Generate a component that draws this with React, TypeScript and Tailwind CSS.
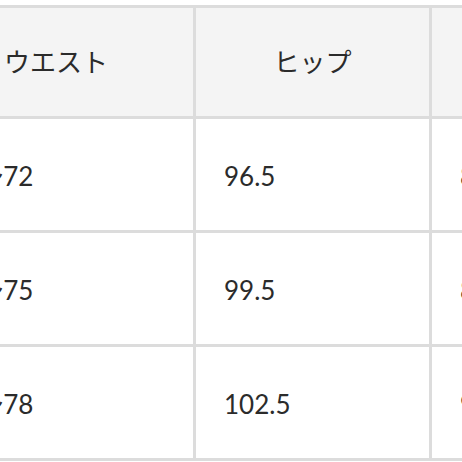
const headers = ['ウエスト', 'ヒップ', '股下']

const rows = [
  ['64〜72', '96.5', '84'],
  ['67〜75', '99.5', '86'],
  ['70〜78', '102.5', '90'],
]

export default function App() {
  return (
    <div className="w-[462px] h-[462px] overflow-hidden bg-white">
      <div
        className="mt-[5px] ml-[-84px] grid w-max grid-cols-[274px_233px_233px] gap-[3px] border-[3px] border-[#dcdcdc] bg-[#dcdcdc] text-[26px] text-[#2b2b2b]"
        style={{ fontFamily: 'Lato, "Noto Sans CJK JP", sans-serif' }}
      >
        {headers.map(h => (
          <div key={h} className="flex h-[108px] items-center justify-center bg-[#f4f4f4]">
            {h}
          </div>
        ))}
        {rows.map(r =>
          r.map((v, i) => (
            <div key={v + i} className="flex h-[111px] items-center bg-white pl-[28px] pt-[4px]">
              {v}
            </div>
          ))
        )}
      </div>
    </div>
  )
}
